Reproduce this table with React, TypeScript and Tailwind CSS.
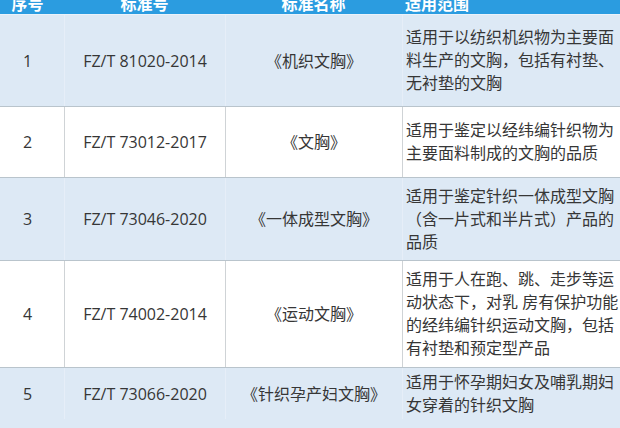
const rows = [
  {
    no: '1',
    code: 'FZ/T 81020-2014',
    name: '《机织文胸》',
    scope: ['适用于以纺织机织物为主要面', '料生产的文胸，包括有衬垫、', '无衬垫的文胸'],
    height: 'h-[92px]',
    shade: true,
  },
  {
    no: '2',
    code: 'FZ/T 73012-2017',
    name: '《文胸》',
    scope: ['适用于鉴定以经纬编针织物为', '主要面料制成的文胸的品质'],
    height: 'h-[71px]',
    shade: false,
  },
  {
    no: '3',
    code: 'FZ/T 73046-2020',
    name: '《一体成型文胸》',
    scope: ['适用于鉴定针织一体成型文胸', '（含一片式和半片式）产品的', '品质'],
    height: 'h-[83px]',
    shade: true,
  },
  {
    no: '4',
    code: 'FZ/T 74002-2014',
    name: '《运动文胸》',
    scope: ['适用于人在跑、跳、走步等运', '动状态下，对乳 房有保护功能', '的经纬编针织运动文胸，包括', '有衬垫和预定型产品'],
    height: 'h-[107px]',
    shade: false,
  },
  {
    no: '5',
    code: 'FZ/T 73066-2020',
    name: '《针织孕产妇文胸》',
    scope: ['适用于怀孕期妇女及哺乳期妇', '女穿着的针织文胸'],
    height: 'h-[70px] pb-[18px]',
    shade: true,
  },
];

export default function App() {
  return (
    <div className="w-[620px] h-[428px] overflow-hidden bg-white font-['Open_Sans','Noto_Sans_CJK_SC',sans-serif] text-[16px] text-[#363636]">
      {/* header, cut at the top */}
      <div className="h-[15px] overflow-hidden bg-[#2b9ce0] border-b border-[#eaf2fa] flex font-bold text-white leading-[16px]">
        <div className="w-[64px] shrink-0 text-center pr-[9px] -mt-[4px]">序号</div>
        <div className="w-[161px] shrink-0 text-center -mt-[4px]">标准号</div>
        <div className="w-[177px] shrink-0 text-center -mt-[4px]">标准名称</div>
        <div className="flex-1 pl-[3px] -mt-[4px]">适用范围</div>
      </div>

      {rows.map(row => {
        const line = row.shade ? 'border-[#e6eef8]' : 'border-[#cfd3d6]';
        return (
          <div
            key={row.no}
            className={`flex items-center border-b border-[#b9c4cc] box-border ${row.height} ${row.shade ? 'bg-[#dde9f5]' : 'bg-white'}`}
          >
            <div className="w-[64px] shrink-0 self-stretch flex items-center justify-center pr-[9px]">{row.no}</div>
            <div className={`w-[161px] shrink-0 self-stretch flex items-center justify-center border-l ${line}`}>
              {row.code}
            </div>
            <div className={`w-[177px] shrink-0 self-stretch flex items-center justify-center border-l ${line}`}>
              {row.name}
            </div>
            <div className={`flex-1 self-stretch flex flex-col justify-center pl-[3px] border-l ${line} leading-[23px] whitespace-nowrap`}>
              {row.scope.map(s => (
                <div key={s}>{s}</div>
              ))}
            </div>
          </div>
        );
      })}
    </div>
  );
}
